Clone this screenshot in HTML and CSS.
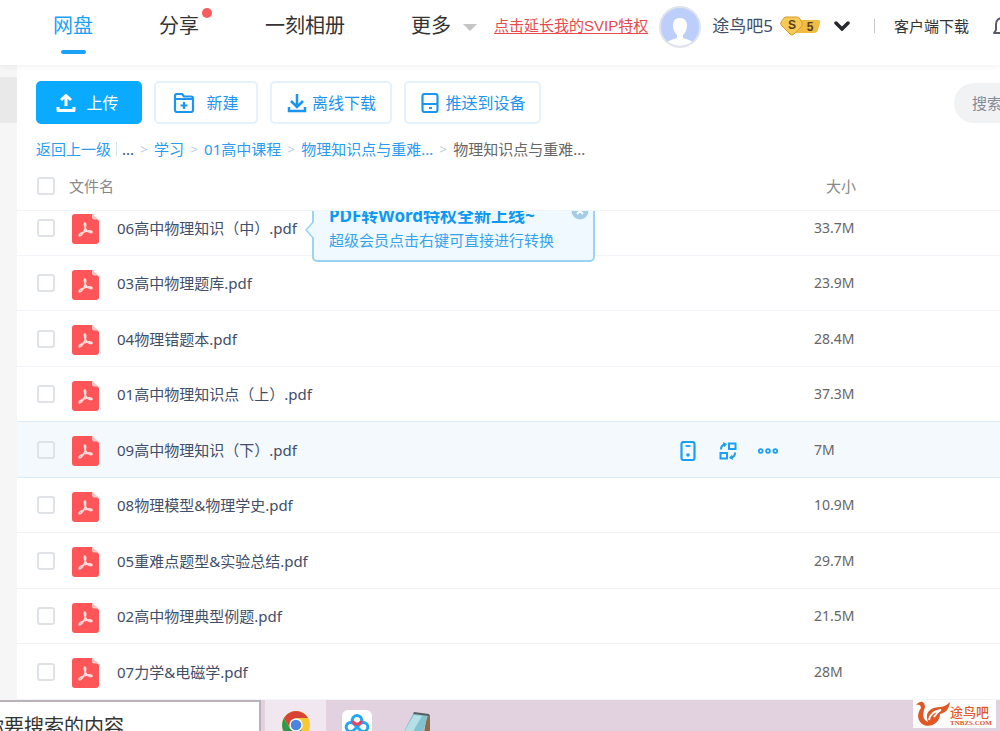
FILE: index.html
```html
<!DOCTYPE html>
<html lang="zh-CN">
<head>
<meta charset="utf-8">
<title>网盘</title>
<link rel="stylesheet" href="styles.css">
</head>
<body>
<svg class="sprite" aria-hidden="true">
  <symbol id="pdf" viewBox="0 0 27 30">
    <path d="M3 0H20L27 7V27a3 3 0 0 1-3 3H3a3 3 0 0 1-3-3V3a3 3 0 0 1 3-3Z" fill="#fd5558"/>
    <path d="M20 0L27 5.500H22a2 2 0 0 1-2-2Z" fill="#ffc4c4"/>
    <path d="M12.500 9c2 0 1 4 .5 6-1 3-3.500 7-5.500 7-1.500-1 1-3 4-4 3-1 7-1.500 8.500-.3.500 1.300-2 1.300-4 0-2-1.500-4.500-5.700-3.500-8.700Z" fill="none" stroke="#ffd9d9" stroke-width="1.600" stroke-linejoin="round"/>
  </symbol>
</svg>
<header class="topbar">
  <nav class="nav">
    <a class="nav-item active" href="#">网盘</a>
    <a class="nav-item" href="#">分享<i class="dot"></i></a>
    <a class="nav-item" href="#">一刻相册</a>
    <a class="nav-item" href="#">更多<i class="caret"></i></a>
  </nav>
  <a class="svip" href="#">点击延长我的SVIP特权</a>
  <svg class="avatar" viewBox="0 0 42 42" aria-hidden="true">
    <clipPath id="face"><circle cx="21" cy="21" r="19"/></clipPath>
    <circle cx="21" cy="21" r="20" fill="#bccffa" stroke="#dfe3ee" stroke-width="2"/>
    <g clip-path="url(#face)" fill="#fff"><path d="M14 20c0-6 3-8 7-8s7 2 7 8c0 4-2 7-4 9v5h-6v-5c-2-2-4-5-4-9Z"/><path d="M5 42c1-7 7-8 13-10h6c6 2 12 3 13 10Z"/></g>
  </svg>
  <span class="user">途鸟吧5</span>
  <svg class="badge" viewBox="0 0 42 20" aria-hidden="true">
    <path d="M14 4H38q3 0 2 3l-2 7q-1 3-4 3H14Z" fill="#f0bc45"/>
    <path d="M6 1H17q2 0 3 2l2 4q1 2-1 4l-7 7q-2 2-4 0L2 10Q0 8 1 6L4 2Q5 1 6 1Z" fill="#f8c955" stroke="#d79b31"/>
    <text x="12" y="13" class="badge-text">S</text><text x="30" y="15" class="badge-text">5</text>
  </svg>
  <svg class="chevron" viewBox="0 0 16 10" aria-hidden="true"><path d="M2 2l6 6 6-6" fill="none" stroke="#26282c" stroke-width="3.500" stroke-linecap="round"/></svg>
  <i class="divider"></i>
  <a class="client" href="#">客户端下载</a>
  <svg class="bell" viewBox="0 0 20 22" aria-hidden="true"><path d="M4 15V9a6 6 0 0 1 12 0v6l2 3H2ZM8 21h4" fill="none" stroke="#555d68" stroke-width="2" stroke-linejoin="round"/></svg>
</header>
<div class="body">
  <aside class="side"><i class="side-active"></i></aside>
  <main class="main">
    <div class="toolbar">
      <button class="btn primary"><svg class="icon" viewBox="0 0 20 20" aria-hidden="true"><path d="M10 13V3M5 7L10 2.500 15 7M2 14v3.500h16V14" fill="none" stroke="currentColor" stroke-width="3" stroke-linejoin="round"/></svg>上传</button>
      <button class="btn create"><svg class="icon" viewBox="0 0 20 20" aria-hidden="true"><path d="M1 6V3q0-2 2-2h5l2 2.500h7q2 0 2 2V17q0 2-2 2H3q-2 0-2-2V6h18M10 9v7M6.500 12.500h7" fill="none" stroke="currentColor" stroke-width="2.200"/></svg>新建</button>
      <button class="btn offline"><svg class="icon" viewBox="0 0 20 20" aria-hidden="true"><path d="M10 1v12M4 8l6 6 6-6M2 14v4h16v-4" fill="none" stroke="currentColor" stroke-width="2.500"/></svg>离线下载</button>
      <button class="btn push"><svg class="icon" viewBox="0 0 20 20" aria-hidden="true"><rect x="2.500" y="1" width="15" height="18" rx="2" fill="none" stroke="currentColor" stroke-width="2.200"/><path d="M2 11h16M9 15h3" stroke="currentColor" stroke-width="2"/></svg>推送到设备</button>
      <input class="search" type="text" placeholder="搜索您的文件" aria-label="搜索">
    </div>
    <nav class="crumbs">
      <a href="#">返回上一级</a><i class="bar"></i><span class="dots">...</span><i class="gt">&gt;</i><a href="#">学习</a><i class="gt">&gt;</i><a href="#">01高中课程</a><i class="gt">&gt;</i><a href="#">物理知识点与重难...</a><i class="gt">&gt;</i><span>物理知识点与重难...</span>
    </nav>
    <table class="files">
      <thead><tr><th><input type="checkbox" aria-label="全选"></th><th class="head-name">文件名</th><th></th><th class="head-size">大小</th></tr></thead>
      <tbody>
        <tr><td><input type="checkbox" id="f1"></td><td class="name"><svg class="pdf"><use href="#pdf"/></svg><label for="f1">06高中物理知识（中）.pdf</label>
          <div class="tip"><svg class="tip-arrow" viewBox="0 0 9 18" aria-hidden="true"><path d="M9 0L1 9l8 9" fill="#f0f9ff" stroke="#9ad3f5" stroke-width="1.500"/></svg><strong>PDF转Word特权全新上线~</strong><span>超级会员点击右键可直接进行转换</span><button class="close" aria-label="关闭"><svg viewBox="0 0 18 18" aria-hidden="true"><circle cx="9" cy="9" r="8.500" fill="#a5cce7"/><path d="M6 6l6 6M12 6l-6 6" stroke="#fff" stroke-width="1.800"/></svg></button></div></td><td></td><td>33.7M</td></tr>
        <tr><td><input type="checkbox" id="f2"></td><td class="name"><svg class="pdf"><use href="#pdf"/></svg><label for="f2">03高中物理题库.pdf</label></td><td></td><td>23.9M</td></tr>
        <tr><td><input type="checkbox" id="f3"></td><td class="name"><svg class="pdf"><use href="#pdf"/></svg><label for="f3">04物理错题本.pdf</label></td><td></td><td>28.4M</td></tr>
        <tr><td><input type="checkbox" id="f4"></td><td class="name"><svg class="pdf"><use href="#pdf"/></svg><label for="f4">01高中物理知识点（上）.pdf</label></td><td></td><td>37.3M</td></tr>
        <tr class="hover"><td><input type="checkbox" id="f5"></td><td class="name"><svg class="pdf"><use href="#pdf"/></svg><label for="f5">09高中物理知识（下）.pdf</label></td><td class="actions">
          <button aria-label="发送到手机"><svg class="icon" viewBox="0 0 20 20" aria-hidden="true"><rect x="3.500" y="1" width="13" height="18" rx="2" fill="none" stroke="currentColor" stroke-width="2.200"/><path d="M7.500 5h5" stroke="currentColor" stroke-width="1.800"/><circle cx="10" cy="14" r="1.800" fill="currentColor"/></svg></button>
          <button aria-label="转换"><svg class="icon" viewBox="0 0 20 20" aria-hidden="true"><g fill="none" stroke="currentColor" stroke-width="2"><path d="M11 2.500h6.500V8H11ZM2.500 12H9v5.500H2.500ZM3 8.500C3 5.500 4 4 6.500 3.500M17 11.500c0 3-1 4.500-3.500 5"/></g><path d="M5 1l4 2-3 3.500ZM15 19l-4-2 3-3.500Z" fill="currentColor"/></svg></button>
          <button aria-label="更多操作"><svg class="icon" viewBox="0 0 20 20" aria-hidden="true"><g fill="none" stroke="currentColor" stroke-width="1.800"><circle cx="2.700" cy="10" r="1.900"/><circle cx="10" cy="10" r="1.900"/><circle cx="17.300" cy="10" r="1.900"/></g></svg></button></td><td>7M</td></tr>
        <tr><td><input type="checkbox" id="f6"></td><td class="name"><svg class="pdf"><use href="#pdf"/></svg><label for="f6">08物理模型&amp;物理学史.pdf</label></td><td></td><td>10.9M</td></tr>
        <tr><td><input type="checkbox" id="f7"></td><td class="name"><svg class="pdf"><use href="#pdf"/></svg><label for="f7">05重难点题型&amp;实验总结.pdf</label></td><td></td><td>29.7M</td></tr>
        <tr><td><input type="checkbox" id="f8"></td><td class="name"><svg class="pdf"><use href="#pdf"/></svg><label for="f8">02高中物理典型例题.pdf</label></td><td></td><td>21.5M</td></tr>
        <tr><td><input type="checkbox" id="f9"></td><td class="name"><svg class="pdf"><use href="#pdf"/></svg><label for="f9">07力学&amp;电磁学.pdf</label></td><td></td><td>28M</td></tr>
      </tbody>
    </table>
  </main>
</div>
<footer class="taskbar">
  <input class="task-search" type="text" value="你要搜索的内容" aria-label="任务栏搜索">
  <button class="task chrome" aria-label="Chrome"><svg viewBox="0 0 28 28" aria-hidden="true"><circle cx="14" cy="14" r="14" fill="#f9c933"/><path d="M14 7H26.100A14 14 0 0 0 1.900 7L8 17Z" fill="#d94336"/><path d="M1.900 7A14 14 0 0 0 14 28L20 17.500 14 21 8 17.500Z" fill="#2f9750"/><circle cx="14" cy="14" r="6.700" fill="#fff"/><circle cx="14" cy="14" r="5.300" fill="#4a86e0"/></svg></button>
  <button class="task disk" aria-label="网盘"><svg viewBox="0 0 30 30" aria-hidden="true"><rect width="30" height="30" rx="6" fill="#fff"/><g fill="none" stroke-width="3"><path d="M12 20a4.500 4.500 0 1 1 0-6l6 6a4.500 4.500 0 1 0 0-6l-6 6" stroke="#24a7f2"/><path d="M10.500 12a4.800 4.800 0 1 1 9 0" stroke="#24a7f2"/><path d="M10.500 11a4.800 4.800 0 0 0 9 0" stroke="#ee4161"/></g></svg></button>
  <button class="task note" aria-label="记事本"><svg viewBox="0 0 30 34" aria-hidden="true"><path d="M24 3l3 1v28l-8 2Z" fill="#8a6d4d"/><path d="M10 3L25 4 19 25 0 22Z" fill="#83c3cf"/><path d="M11 4l8 1-10 17-8-1Z" fill="#b5e0e6"/><path d="M11 1l15 2v2L10 3Z" fill="#555f61"/></svg></button>
  <div class="mark">
    <svg viewBox="0 0 34 28" aria-hidden="true"><path d="M0 5C5-1 9 2 9 7c-3 8-2 13 3 15-3-8 0-14 11-15 4 0 7-1 11-5-1 8-5 11-10 12 0 9-10 15-18 10C0 19 2 12 5 8 5 5 3 4 0 5Z" fill="#e05826"/><path d="M13 20c1-6 5-9 12-10-4 2-5 3-7 7" fill="none" stroke="#fff" stroke-width="1.800"/></svg>
    <div class="mark-text"><b>途鸟吧</b><small>TNBZS.COM</small></div>
  </div>
</footer>
</body>
</html>
```
FILE: styles.css
```css
* { box-sizing: border-box; }
body { margin: 0; height: 100vh; overflow: hidden; display: flex; flex-direction: column; background: #fff; color: #424e67; font: 15px/20px "Noto Sans", "Noto Sans CJK SC", sans-serif; }
a { color: inherit; text-decoration: none; }
button { font: inherit; color: inherit; padding: 0; border: 0; background: none; cursor: pointer; }
i { font-style: normal; }
svg { display: block; flex: none; }
.sprite { position: absolute; width: 0; height: 0; }
.icon { width: 20px; height: 20px; }

.topbar { position: relative; z-index: 2; flex: none; height: 65px; padding: 0 0 14px 53px; display: flex; align-items: center; overflow: hidden; white-space: nowrap; box-shadow: 0 2px 6px rgba(0,0,0,.05); background: #fff; }
.topbar > * { flex: none; }
.nav { display: flex; gap: 66px; font-size: 20px; line-height: 28px; color: #333; }
.nav-item { position: relative; display: flex; align-items: center; }
.active { color: #1ba1f5; }
.active::after { content: ""; position: absolute; left: 8px; bottom: -14px; width: 25px; height: 4px; border-radius: 2px; background: #1ba1f5; }
.dot { position: absolute; right: -13px; top: -4px; width: 10px; height: 10px; border-radius: 50%; background: #f85d5d; }
.caret { margin: 4px 0 0 12px; border: 7px solid transparent; border-top-color: #c4c4c4; border-bottom: 0; }
.svip { margin-left: 17px; color: #e8494c; text-decoration: underline; text-underline-offset: 2px; font-family: "Liberation Sans", "Noto Sans CJK SC", sans-serif; }
.avatar { width: 42px; height: 42px; margin: 2px 0 0 11px; }
.user { margin-left: 11px; font-size: 17px; }
.badge { width: 42px; height: 20px; margin-left: 7px; }
.badge-text { font: bold 12px "Liberation Sans", sans-serif; fill: #57401a; text-anchor: middle; }
.chevron { width: 16px; height: 10px; margin-left: 12px; }
.divider { width: 1px; height: 14px; margin-left: 24px; background: #c5c8ce; }
.client { margin-left: 19px; color: #333; }
.bell { width: 20px; height: 22px; margin-left: 23px; }

.body { flex: 1; min-height: 0; display: flex; }
.side { flex: none; width: 17px; padding-top: 12px; background: #f6f6f6; }
.side-active { display: block; height: 46px; background: #e9e9e9; }
.main { flex: 1; min-width: 0; display: flex; flex-direction: column; padding-top: 16px; }
.toolbar { display: flex; gap: 12px; padding-left: 19px; overflow: hidden; }
.btn { flex: none; height: 43px; display: flex; align-items: center; justify-content: center; gap: 7px; font-size: 16px; color: #1b95ee; background: #fff; border: 2px solid #e3f2fd; border-radius: 5px; }
.btn .icon { width: 22px; }
.primary { width: 106px; gap: 9px; padding-right: 4px; color: #fff; background: #09aaff; border-color: #09aaff; }
.create { width: 104px; gap: 11px; }
.offline { width: 122px; gap: 4px; }
.push { width: 137px; gap: 4px; }
.search { flex: none; width: 240px; height: 40px; margin: 2px -194px 0 auto; padding: 0 18px; border: 0; border-radius: 20px; background: #f1f2f4; font: inherit; }
.search::placeholder { color: #858a94; }
.crumbs { display: flex; align-items: center; padding: 14px 19px 0; line-height: 22px; color: #666; white-space: nowrap; }
.crumbs a { color: #2a9cf0; }
.bar { width: 1px; height: 14px; margin: 0 5px; background: #cfe2f5; }
.dots { color: #424e67; }
.gt { width: 20px; text-align: center; font-size: 13px; color: #b9c9e6; }

.files { flex: 1; min-height: 0; display: flex; flex-direction: column; }
.files thead { flex: none; display: block; }
.files tbody { flex: 1; min-height: 0; display: flex; flex-direction: column; justify-content: flex-end; overflow: hidden; }
.files tr { flex: none; position: relative; display: grid; grid-template-columns: 55px minmax(0, 1fr) 136px 186px; align-items: center; height: 56px; padding-left: 20px; border-bottom: 1px solid #f1f5fa; }
.files thead tr { height: 51px; padding-top: 2px; }
.files tbody tr:nth-child(even) { height: 55px; }
.files th, .files td { padding: 0; text-align: left; font-weight: 400; }
.files td:last-child { font-size: 14px; color: #666; }
.files th.head-name { margin-left: -23px; color: #888; }
.files th.head-size { padding-left: 12px; color: #888; }
.files input { appearance: none; display: block; width: 18px; height: 18px; margin: 0; border: 2px solid #dfe3e8; border-radius: 3px; background: #fff; }
.name { display: flex; align-items: center; margin-left: -20px; white-space: nowrap; }
.pdf { width: 27px; height: 30px; margin: 3px 18px 0 0; }
.files tr.hover { background: #f3f9fd; border-color: #d9ecf8; box-shadow: 0 -1px #d9ecf8; }
.hover input { background: transparent; }
.actions { display: flex; gap: 20px; margin-top: 2px; color: #1b9ff3; }
.tip { position: absolute; z-index: 1; left: 295px; top: -4px; width: 283px; height: 66px; padding: 7px 15px; display: flex; flex-direction: column; gap: 2px; color: #35a3ec; background: #f0f9ff; border: 2px solid #9ad3f5; border-radius: 5px; line-height: 22px; }
.tip strong { font-size: 17px; color: #0d98f2; }
.tip-arrow { position: absolute; left: -9px; top: 23px; width: 9px; height: 18px; }
.close { position: absolute; right: 4px; top: 4px; width: 18px; height: 18px; }

.taskbar { flex: none; height: 31px; display: flex; align-items: flex-start; overflow: hidden; background: #e2d1df; }
.task-search { width: 261px; height: 50px; margin-right: 4px; padding: 0; border: 2px solid #b9b3b9; border-left: 0; background: #fff; color: #333; font: 20px "Noto Sans CJK SC", sans-serif; text-indent: -16px; }
.task { flex: none; width: 61px; height: 50px; padding-top: 11px; display: flex; justify-content: center; align-items: flex-start; }
.task svg { width: 28px; height: 28px; }
.chrome { background: #f0e7f0; }
.task.disk { padding-top: 10px; }
.disk svg { width: 30px; height: 30px; }
.task.note svg { width: 30px; height: 34px; }
.mark { margin-left: auto; margin-right: 4px; width: 83px; height: 28px; display: flex; align-items: center; background: #fff; color: #e05826; }
.mark svg { width: 34px; height: 28px; margin-left: 3px; }
.mark-text { display: flex; flex-direction: column; padding-top: 3px; }
.mark-text b { font-size: 13px; line-height: 14px; font-weight: 500; }
.mark-text small { font: bold 7px/8px "Liberation Serif", serif; }
```
